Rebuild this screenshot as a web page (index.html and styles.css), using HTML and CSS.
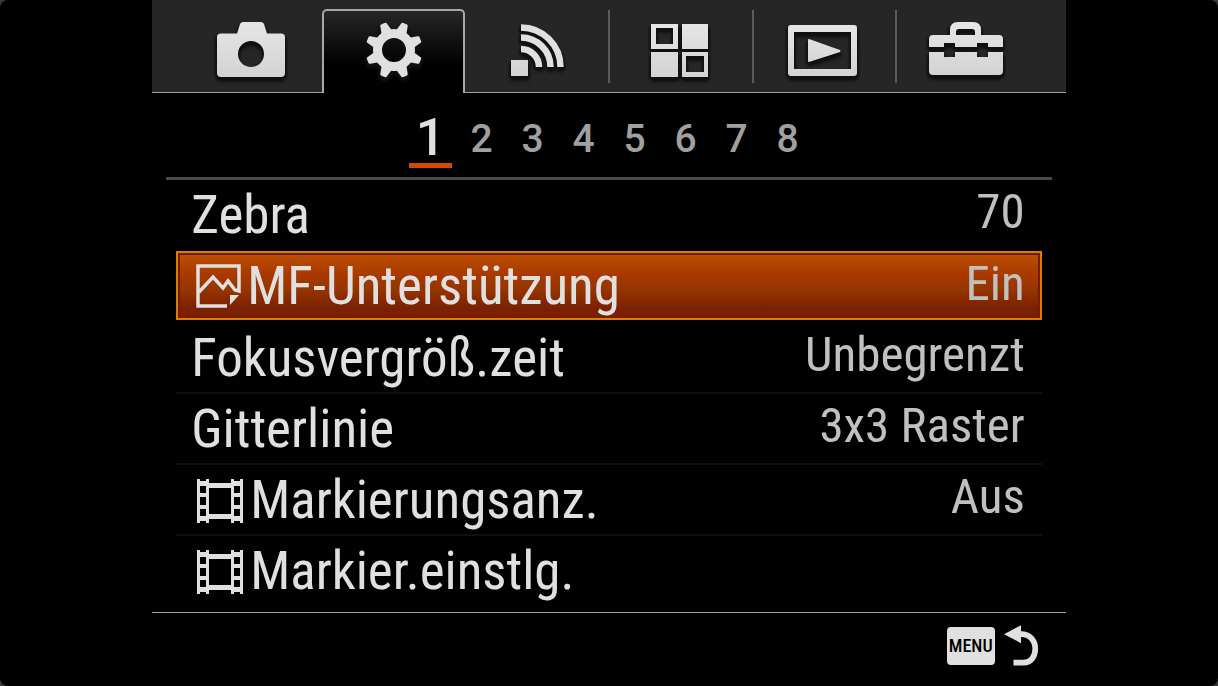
FILE: index.html
```html
<!DOCTYPE html>
<html lang="de">
<head>
<meta charset="utf-8">
<meta name="viewport" content="width=device-width, initial-scale=1">
<title>Kameramenü</title>
<link rel="stylesheet" href="styles.css">
</head>
<body>
<svg class="defs" width="0" height="0" aria-hidden="true">
  <defs>
    <linearGradient id="metal" gradientUnits="userSpaceOnUse" x1="0" y1="8" x2="0" y2="62">
      <stop offset="0" stop-color="#e6e6e6"/><stop offset="1" stop-color="#d2d2d2"/>
    </linearGradient>
    <path id="tooth" d="M-5.500-19 L-3.600-27 Q-3.400-28.500 -2.200-28.500 H2.200 Q3.400-28.500 3.600-27 L5.500-19 Z"/>
    <symbol id="film" viewBox="0 0 46 44">
      <path fill="#e0e0e0" fill-rule="evenodd" d="M0 0H3V2H9V0H12V4H34V0H37V2H43V0H46V44H43V42H37V44H34V40H12V44H9V42H3V44H0ZM3 7V14H9V7ZM3 18V26H9V18ZM3 30V37H9V30ZM37 7V14H43V7ZM37 18V26H43V18ZM37 30V37H43V30ZM12 9V35H34V9Z"/>
    </symbol>
  </defs>
</svg>
<main class="screen">
  <nav class="tabs" aria-label="Hauptmenü">
    <button class="tab" type="button" aria-label="Kamera">
      <svg class="tab-icon" viewBox="0 0 100 70"><path fill="url(#metal)" fill-rule="evenodd" d="M20 18.500H36L39 9Q40 7 42 7H60Q62 7 63 9L66 18.500H80Q84 18.500 84 22V58Q84 62 80 62H20Q16 62 16 58V22Q16 18.500 20 18.500ZM50 26A13 13 0 1 0 50 52A13 13 0 1 0 50 26Z"/></svg>
    </button>
    <button class="tab tab-active" type="button" aria-label="Benutzereinstellungen" aria-current="page">
      <svg class="tab-icon" viewBox="0 0 100 70"><g transform="translate(50 35)" fill="#e0e0e0"><path fill-rule="evenodd" d="M0-21A21 21 0 1 1 0 21A21 21 0 1 1 0-21ZM0-12A12 12 0 1 0 0 12A12 12 0 1 0 0-12Z"/><use href="#tooth" transform="rotate(22.500)"/><use href="#tooth" transform="rotate(67.500)"/><use href="#tooth" transform="rotate(112.500)"/><use href="#tooth" transform="rotate(157.500)"/><use href="#tooth" transform="rotate(202.500)"/><use href="#tooth" transform="rotate(247.500)"/><use href="#tooth" transform="rotate(292.500)"/><use href="#tooth" transform="rotate(337.500)"/></g></svg>
    </button>
    <button class="tab" type="button" aria-label="Drahtlos">
      <svg class="tab-icon" viewBox="0 0 100 70"><path fill="url(#metal)" d="M24 45H41V61H24Z"/><g fill="none" stroke="#e0e0e0" stroke-width="6.500"><path d="M34 12.500A39.500 39.500 0 0 1 73.500 52"/><path d="M34 22.500A29.500 29.500 0 0 1 63.500 52"/><path d="M34 34A18 18 0 0 1 52 52"/></g></svg>
    </button>
    <button class="tab tab-divided" type="button" aria-label="Applikation">
      <svg class="tab-icon" viewBox="0 0 100 70"><path fill="url(#metal)" fill-rule="evenodd" d="M21 9H48V34H21ZM26 13V29H43V13ZM52 9H78V34H52ZM21 37H48V62H21ZM52 37H78V62H52ZM56 41V57H74V41Z"/></svg>
    </button>
    <button class="tab tab-divided" type="button" aria-label="Wiedergabe">
      <svg class="tab-icon" viewBox="0 0 100 70"><path fill="url(#metal)" fill-rule="evenodd" d="M18 10H81Q84 10 84 13V58Q84 61 81 61H18Q15 61 15 58V13Q15 10 18 10ZM21 17V54H78V17ZM35 25Q35 24 36 24L67 35Q68 36 67 37L36 47Q35 47 35 46Z"/></svg>
    </button>
    <button class="tab tab-divided" type="button" aria-label="Einstellung">
      <svg class="tab-icon" viewBox="0 0 100 70"><path fill="url(#metal)" fill-rule="evenodd" d="M13 32V24Q13 20 17 20H34V15Q34 7 42 7H57Q65 7 65 15V20H83Q87 20 87 24V32H72V28H61V32H39V28H28V32ZM40 20H59V17Q59 14 56 14H43Q40 14 40 17ZM13 37H28V42H39V37H61V42H72V37H87V56Q87 60 83 60H17Q13 60 13 56Z"/></svg>
    </button>
  </nav>

  <nav class="pages" aria-label="Seiten">
    <button class="page page-active" type="button" aria-current="page">1</button>
    <button class="page" type="button">2</button>
    <button class="page" type="button">3</button>
    <button class="page" type="button">4</button>
    <button class="page" type="button">5</button>
    <button class="page" type="button">6</button>
    <button class="page" type="button">7</button>
    <button class="page" type="button">8</button>
  </nav>

  <section class="settings">
    <button class="row" type="button"><span class="label">Zebra</span><span class="value">70</span></button>
    <button class="row row-selected" type="button">
      <svg class="row-icon" viewBox="0 0 46 44" aria-hidden="true"><path fill="none" stroke="#e0e0e0" stroke-width="3.500" d="M31 42H2V2H43V27L39 26L32 17L27 24L17 13L3 28"/><path fill="#e0e0e0" d="M34 31H43L34 41Z"/></svg>
      <span class="label">MF-Unterstützung</span><span class="value">Ein</span>
    </button>
    <button class="row" type="button"><span class="label">Fokusvergröß.zeit</span><span class="value">Unbegrenzt</span></button>
    <button class="row" type="button"><span class="label">Gitterlinie</span><span class="value">3x3 Raster</span></button>
    <button class="row" type="button"><svg class="row-icon" aria-hidden="true"><use href="#film"/></svg><span class="label">Markierungsanz.</span><span class="value">Aus</span></button>
    <button class="row" type="button"><svg class="row-icon" aria-hidden="true"><use href="#film"/></svg><span class="label">Markier.einstlg.</span></button>
  </section>

  <footer class="footer">
    <button class="back" type="button">
      <span class="menu-key">MENU</span>
      <svg class="back-icon" viewBox="0 0 38 44" aria-hidden="true"><path fill="none" stroke="#e0e0e0" stroke-width="6" d="M10 39.500H21C28 39.500 33 34 33 25C33 16 27 9.500 18 9.500H14"/><path fill="#e0e0e0" d="M0 9.500L18 0V19Z"/></svg>
    </button>
  </footer>
</main>
</body>
</html>
```
FILE: styles.css
```css
* { box-sizing: border-box; }

html { background: #3a3a3a; }

body {
  margin: 0;
  min-height: 100vh;
  background: #010101;
  border-radius: 8px;
  color: #e0e0e0;
  font-family: "Roboto Condensed", Roboto, sans-serif;
}

button {
  margin: 0;
  padding: 0;
  border: 0;
  background: none;
  color: inherit;
  font: inherit;
  cursor: pointer;
}

.defs { position: absolute; }

.screen {
  width: 75%;
  min-height: 100vh;
  margin: 0 auto;
  display: flex;
  flex-direction: column;
}

.tabs {
  display: grid;
  grid-template-columns: repeat(6, 1fr);
  height: 93px;
  padding: 9px 28px 0 27px;
  background: #262626;
  border-bottom: 1px solid #a0a0a0;
}

.tab {
  display: flex;
  justify-content: center;
  align-items: flex-start;
  padding-top: 6px;
}

.tab-active {
  margin-bottom: -1px;
  padding-top: 4px;
  border: 2px solid #a8a8a8;
  border-bottom: 0;
  border-radius: 5px 5px 0 0;
  background: linear-gradient(#262626, #010101 65%);
}

.tab-divided {
  background: linear-gradient(#5c5c5c, #5c5c5c) left 1px / 2px 73px no-repeat;
}

.tab-icon {
  flex: none;
  width: 100px;
  height: 70px;
  overflow: visible;
  filter: drop-shadow(-2px 2px 1px #101010) drop-shadow(2px 3px 1px #101010);
}

.pages {
  display: flex;
  align-items: flex-end;
  justify-content: center;
  height: 87px;
  margin: 0 14px;
  padding-bottom: 9px;
  gap: 8px;
  border-bottom: 3px solid #4a4a4a;
  font-family: Roboto, sans-serif;
  font-weight: 500;
}

.page {
  width: 43px;
  padding-bottom: 6px;
  color: #a0a0a0;
  font-size: 39px;
  line-height: 46px;
}

.page-active {
  padding-bottom: 0;
  border-bottom: 5px solid #d44a00;
  color: #e0e0e0;
  font-size: 52px;
  line-height: 50px;
}

.settings {
  display: flex;
  flex-direction: column;
  margin: 0 24px;
}

.row {
  display: flex;
  align-items: flex-start;
  height: 71px;
  padding: 0 17px 0 15px;
  border-bottom: 2px solid #101010;
  text-align: left;
  white-space: nowrap;
}

.row:first-child,
.row:last-child { border-bottom-color: transparent; }

.row-selected {
  height: 69px;
  margin-bottom: 3px;
  padding: 0 15px 0 18px;
  border: 2px solid #de7c00;
  background: linear-gradient(#bc5000, #a83800 35%, #963600 55%, #7c2000 85%);
  box-shadow: inset 0 0 0 2px #701c00;
}

.row-icon {
  width: 46px;
  height: 44px;
  flex: none;
  margin: 14px 7px 0 6px;
}

.row-selected .row-icon { margin: 11px 5px 0 0; }

.label {
  font-size: 53px;
  line-height: 71px;
}

.value {
  margin-left: auto;
  color: #c0c0c0;
  font-size: 49px;
  line-height: 63px;
}

.row-selected .label { line-height: 67px; }
.row-selected .value { line-height: 61px; }

.footer {
  flex: 1;
  display: flex;
  justify-content: flex-end;
  align-items: flex-start;
  margin-top: 5px;
  padding: 12px 26px 0 0;
  border-top: 1px solid #a0a0a0;
}

.back {
  display: flex;
  align-items: center;
  gap: 9px;
}

.menu-key {
  width: 48px;
  border-radius: 4px;
  background: #e0e0e0;
  color: #010101;
  font-size: 18px;
  font-weight: 500;
  line-height: 38px;
  text-align: center;
}

.back-icon {
  width: 36px;
  height: 42px;
}
```
